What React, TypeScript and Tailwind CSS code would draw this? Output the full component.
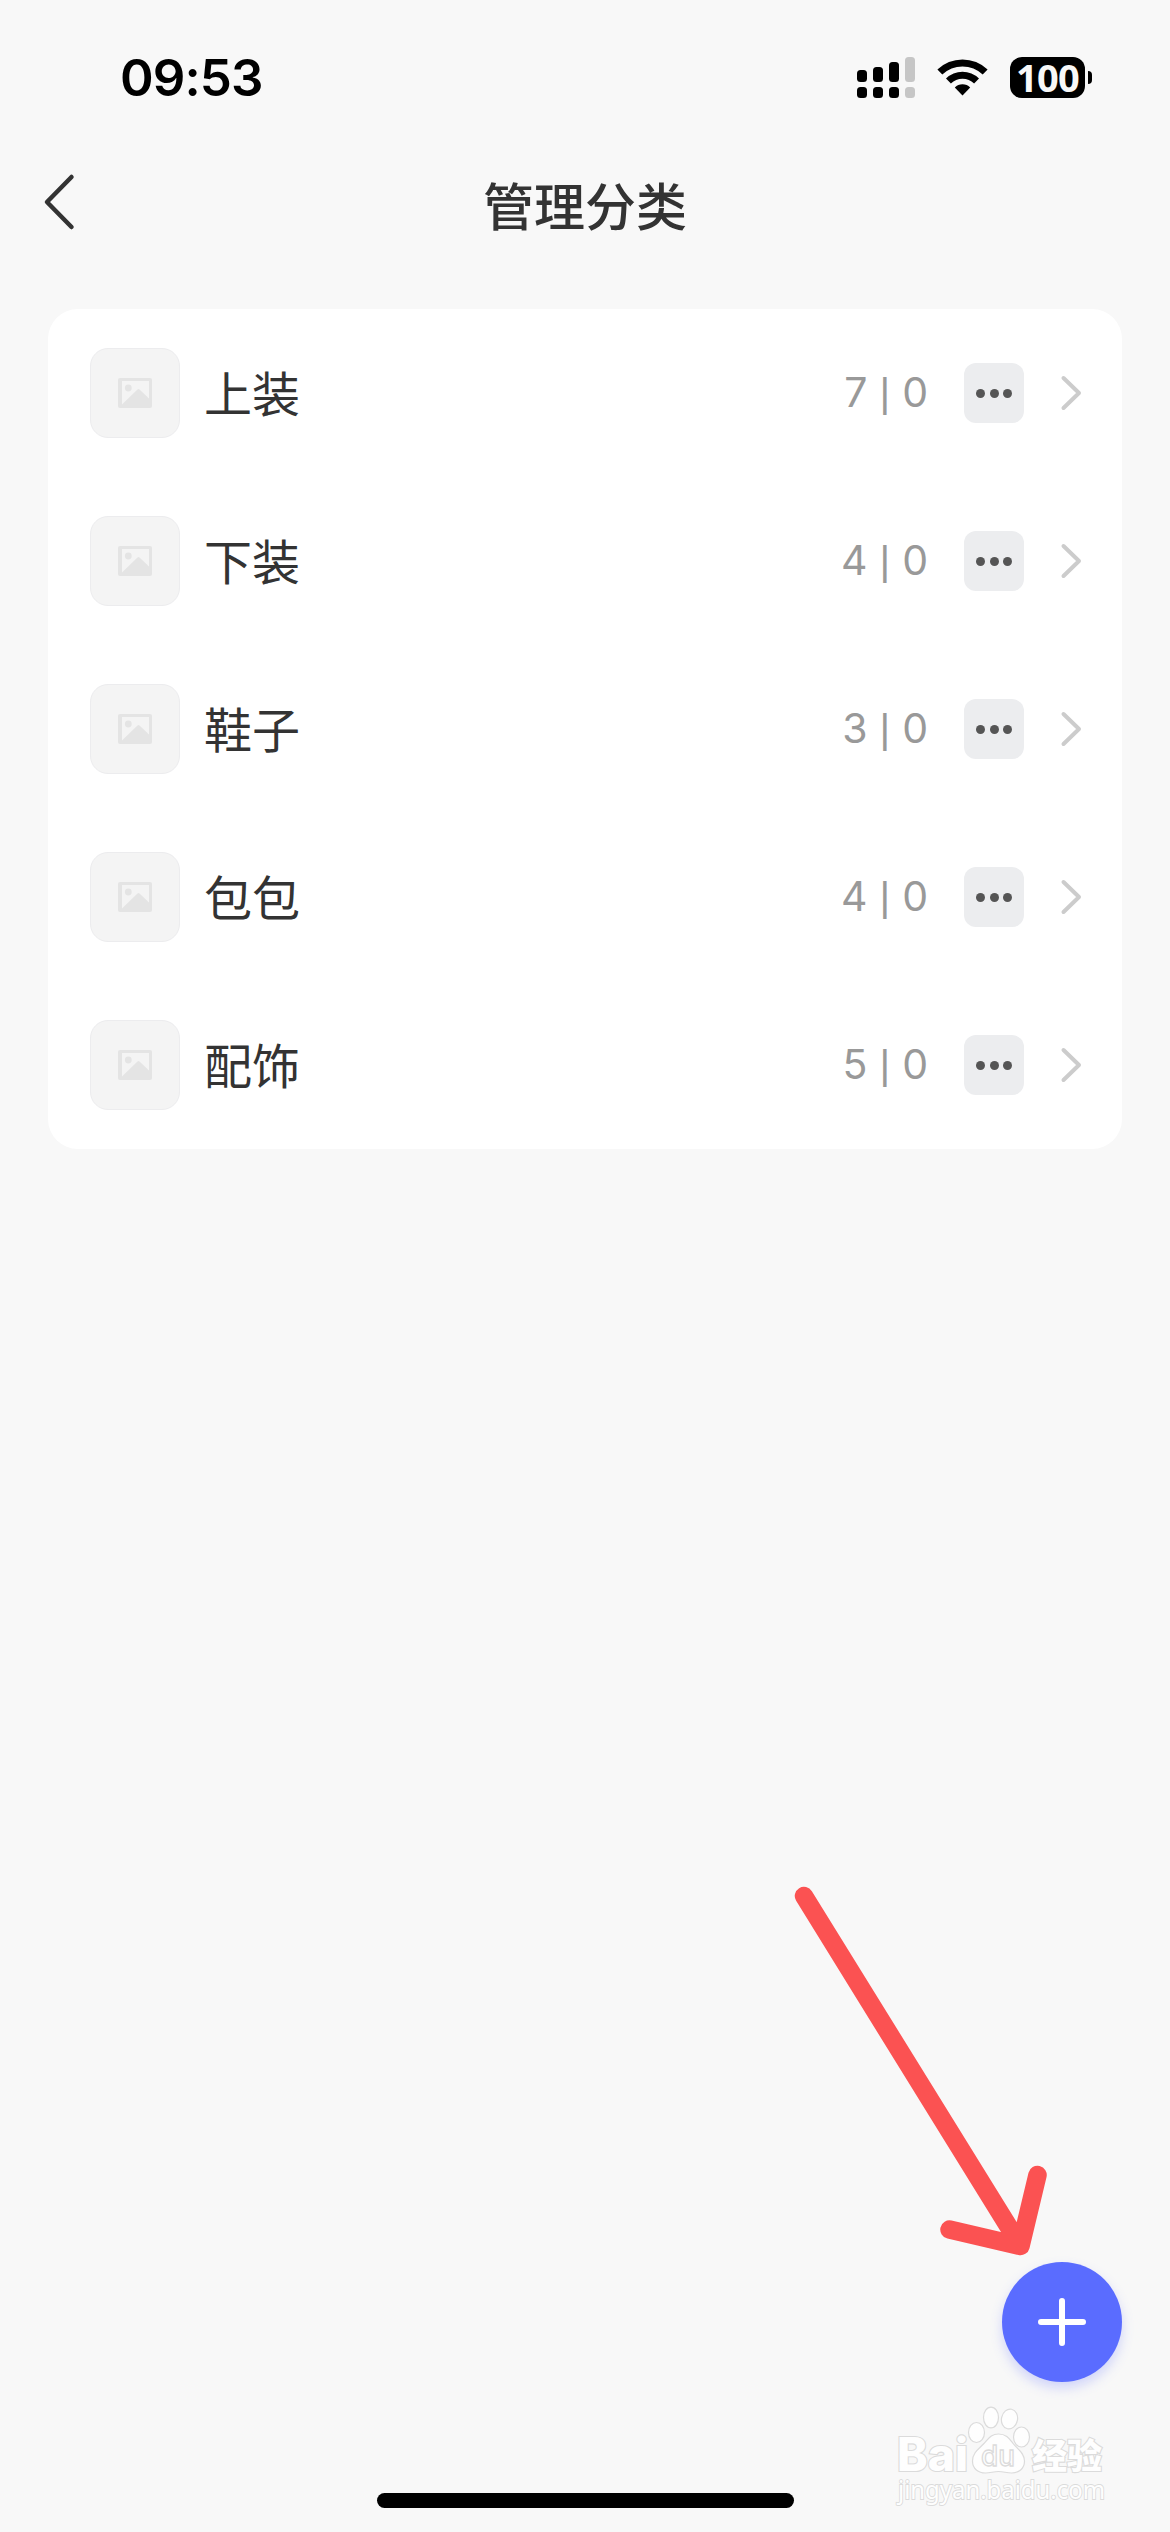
import React from 'react';

interface Category {
  name: string;
  count: number;
  hidden: number;
}

const categories: Category[] = [
  { name: '上装', count: 7, hidden: 0 },
  { name: '下装', count: 4, hidden: 0 },
  { name: '鞋子', count: 3, hidden: 0 },
  { name: '包包', count: 4, hidden: 0 },
  { name: '配饰', count: 5, hidden: 0 },
];

function StatusBar() {
  return (
    <div className="flex h-[155px] items-center justify-between pl-[120px] pr-[78px] text-black">
      <span className="text-[51px] leading-none font-semibold tracking-[-0.9px]">09:53</span>
      <div className="flex items-center">
        <svg className="mr-[22px] h-[41px] w-[58px]" viewBox="0 0 58 41">
          <rect x="0" y="13" width="10" height="12" rx="3.5" />
          <rect x="16" y="10" width="10" height="15" rx="3.5" />
          <rect x="32" y="5" width="10" height="20" rx="3.5" />
          <rect x="48" y="0" width="10" height="25" rx="3.5" fill="#c6c6c6" />
          <rect x="0" y="30" width="10" height="11" rx="3.5" />
          <rect x="16" y="30" width="10" height="11" rx="3.5" />
          <rect x="32" y="30" width="10" height="11" rx="3.5" />
          <rect x="48" y="30" width="10" height="11" rx="3.5" fill="#c6c6c6" />
        </svg>
        <svg className="mr-[22px] h-[37px] w-[51px]" viewBox="0 0 51 37">
          <path d="M0.4 10.6a36 36 0 0 1 50.2 0l-4.9 5a29 29 0 0 0-40.4 0z" />
          <path d="M9 19.4a23.6 23.6 0 0 1 33 0l-4.9 5a16.6 16.6 0 0 0-23.2 0z" />
          <path d="M17.8 28.4a11 11 0 0 1 15.4 0L25.5 36.6z" />
        </svg>
        <div className="flex h-[41px] w-[75px] items-center justify-center rounded-[12px] bg-black pb-px font-['Noto_Sans'] text-[38px] leading-none font-bold tracking-[-0.8px] text-[#f8f8f8]">
          100
        </div>
        <div className="ml-[3px] h-[13px] w-[4px] rounded-r-full bg-black" />
      </div>
    </div>
  );
}

function Header() {
  return (
    <div className="grid h-[154px] grid-cols-[1fr_auto_1fr] pt-[16px]">
      <button className="flex h-[62px] w-[100px] items-center pl-[42px]">
        <svg className="h-[60px] w-[36px]" viewBox="0 0 36 60" fill="none">
          <path d="M29.5 5L5 30l24.5 25" stroke="#333" strokeWidth="4.5" strokeLinecap="round" strokeLinejoin="round" />
        </svg>
      </button>
      <h1 className="h-[74px] text-[51px] leading-[74px] font-medium text-[#333]">管理分类</h1>
      <div />
    </div>
  );
}

function CategoryRow({ name, count, hidden }: Category) {
  return (
    <div className="flex h-[168px] items-center pr-[39px] pl-[42px]">
      <div className="flex size-[90px] items-center justify-center rounded-[18px] border border-[#ececee] bg-[#f4f4f4]">
        <svg className="h-[30px] w-[34px]" viewBox="0 0 34 30">
          <path
            fill="#e4e4e4"
            fillRule="evenodd"
            d="M2 0h30a2 2 0 0 1 2 2v26a2 2 0 0 1-2 2H2a2 2 0 0 1-2-2V2a2 2 0 0 1 2-2zM4 3v23.5L19.5 11.5q1-.8 2 0L31 20.5V3z"
          />
          <circle cx="10.3" cy="10" r="3.4" fill="#e4e4e4" />
        </svg>
      </div>
      <span className="ml-[24px] pt-[3px] text-[48px] leading-none text-[#333]">{name}</span>
      <span className="ml-auto flex items-baseline gap-[12px] text-[41px] leading-none text-[#999]">
        <span>{count}</span>
        <span className="font-['Liberation_Sans']">|</span>
        <span>{hidden}</span>
      </span>
      <button className="ml-[36px] flex size-[60px] items-center justify-center gap-[4.6px] rounded-[12px] bg-[#ecedef]">
        <span className="size-[9px] rounded-full bg-[#555]" />
        <span className="size-[9px] rounded-full bg-[#555]" />
        <span className="size-[9px] rounded-full bg-[#555]" />
      </button>
      <svg className="ml-[35px] h-[38px] w-[24px]" viewBox="0 0 24 38" fill="none">
        <path d="M4.5 4l15.5 15L4.5 34" stroke="#ccc" strokeWidth="4" strokeLinecap="round" strokeLinejoin="round" />
      </svg>
    </div>
  );
}

function Watermark() {
  return (
    <svg
      className="absolute right-[40px] bottom-[12px] h-[130px] w-[250px]"
      viewBox="0 0 250 130"
      fill="#fefefe"
      stroke="#dbdbdb"
      strokeWidth="1.2"
    >
      <ellipse cx="96.5" cy="42.5" rx="8" ry="10" />
      <ellipse cx="111" cy="27.5" rx="7.5" ry="10.3" />
      <ellipse cx="129.5" cy="29" rx="8" ry="10" transform="rotate(12 129.5 29)" />
      <ellipse cx="141.5" cy="47" rx="8" ry="10" />
      <path d="M118.5 44c8 0 11 5 15 10s11 9 11 17-6 12-13 12c-5 0-8-1.5-13-1.5s-8 1.5-13 1.5c-7 0-13-4-13-12s6-12 11-17 7-10 15-10z" />
      <g className="[paint-order:stroke]" strokeWidth="2.2">
        <text x="17" y="81" className="text-[46px] font-extrabold" textLength="71" lengthAdjust="spacingAndGlyphs">
          Bai
        </text>
        <text x="152" y="79" className="text-[35px] font-black" textLength="70" lengthAdjust="spacingAndGlyphs">
          经验
        </text>
        <text
          x="18"
          y="109"
          className="font-['Noto_Sans'] text-[25px]"
          strokeWidth="1.8"
          textLength="207"
          lengthAdjust="spacingAndGlyphs"
        >
          jingyan.baidu.com
        </text>
      </g>
      <text x="101" y="76" className="text-[28px] font-medium" strokeWidth="1.3" textLength="34" lengthAdjust="spacingAndGlyphs">
        du
      </text>
    </svg>
  );
}

export default function App() {
  return (
    <div className="relative flex h-[2532px] w-[1170px] flex-col overflow-hidden bg-[#f8f8f8] font-[Inter,'Noto_Sans_CJK_SC',sans-serif]">
      <StatusBar />
      <Header />

      <main className="mx-[48px] rounded-[30px] bg-white">
        {categories.map((category) => (
          <CategoryRow key={category.name} {...category} />
        ))}
      </main>

      {/* Hint arrow pointing to the add button */}
      <svg className="absolute top-[1870px] left-[780px] h-[400px] w-[280px]" viewBox="0 0 280 400" fill="none">
        <path
          d="M24 26L240.5 376M169.5 359.5L240.5 376L257.5 305"
          stroke="#fb5252"
          strokeWidth="18.5"
          strokeLinecap="round"
          strokeLinejoin="round"
        />
      </svg>

      <button className="absolute right-[48px] bottom-[150px] flex size-[120px] items-center justify-center rounded-full bg-[#5a6cff] shadow-[0_6px_12px_rgba(90,108,255,0.25)]">
        <svg className="size-[48px]" viewBox="0 0 48 48" fill="none">
          <path d="M24 3v42M3 24h42" stroke="#fff" strokeWidth="6" strokeLinecap="round" />
        </svg>
      </button>

      <Watermark />

      {/* Home indicator */}
      <div className="mx-auto mt-auto mb-[24px] h-[15px] w-[417px] rounded-full bg-black" />
    </div>
  );
}
